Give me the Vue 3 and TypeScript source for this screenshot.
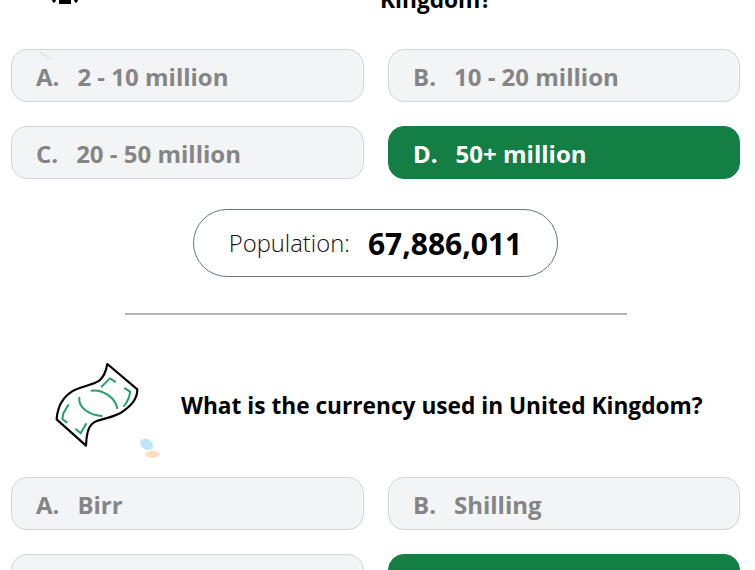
<script setup lang="ts">
interface Option { letter: string; text: string; correct?: boolean }
const firstOptions: Option[] = [
  { letter: 'A.', text: '2 - 10 million' },
  { letter: 'B.', text: '10 - 20 million' },
  { letter: 'C.', text: '20 - 50 million' },
  { letter: 'D.', text: '50+ million', correct: true },
]
const secondOptions: Option[] = [
  { letter: 'A.', text: 'Birr' },
  { letter: 'B.', text: 'Shilling' },
  { letter: 'C.', text: 'Dollar' },
  { letter: 'D.', text: 'Pound', correct: true },
]
</script>

<template>
  <main class="page">
    <section class="top">
      <div class="cut-head">
        <svg class="cut-icon" width="40" height="6" viewBox="0 0 40 6">
          <path d="M7 0 L11 0 L10 2.5 L8 2.5Z M14 0 H26 V4 H14Z M29 0 L33 0 L32 2.5 L30 2.5Z" fill="#000" />
        </svg>
        <span class="cut-title">Kingdom?</span>
      </div>
      <div class="options">
        <div v-for="o in firstOptions" :key="o.letter" class="opt" :class="{ correct: o.correct }">
          <span class="letter">{{ o.letter }}</span><span>{{ o.text }}</span>
        </div>
        <svg class="fleck" width="16" height="12" viewBox="0 0 16 12"><path d="M2 2 L14 10" stroke="#d5efdf" stroke-width="2" /></svg>
      </div>
    </section>

    <div class="pop">
      <span class="pop-label">Population:</span>
      <strong class="pop-value">67,886,011</strong>
    </div>

    <hr class="rule" />

    <div class="question">
      <svg class="money" width="150" height="120" viewBox="0 0 450 360" fill="none">
        <path d="M232 42 L322 118 C322 145 308 165 270 190 C245 203 225 204 200 213 C178 222 170 240 168 287 L80 208 C82 175 95 145 125 125 C150 108 185 108 208 92 C222 80 228 65 232 42Z" fill="#fff" stroke="#000" stroke-width="6.5" stroke-linejoin="round" />
        <g stroke="#23a164" stroke-width="6" stroke-linecap="round" stroke-linejoin="round">
          <path d="M185 122 C215 118 255 140 262 175" />
          <path d="M148 143 C145 172 175 195 215 198" />
          <path d="M215 110 L240 85 L255 95" />
          <path d="M285 115 L300 125 C300 140 292 155 282 168" />
          <path d="M115 165 L100 190 L97 207 L110 217" />
          <path d="M138 238 L152 250 L168 222" />
        </g>
        <ellipse cx="350" cy="283" rx="21" ry="15" fill="#bfe6f5" transform="rotate(30 350 283)" />
        <ellipse cx="367" cy="313" rx="22" ry="11" fill="#fbdfc0" />
      </svg>
      <h2 class="q-text">What is the currency used in United Kingdom?</h2>
    </div>

    <div class="options second">
      <div v-for="o in secondOptions" :key="o.letter" class="opt" :class="{ correct: o.correct }">
        <span class="letter">{{ o.letter }}</span><span>{{ o.text }}</span>
      </div>
    </div>
  </main>
</template>

<style>
html, body { margin: 0; background: #fff; overflow: hidden; }
</style>

<style scoped>
.page {
  width: 755px;
  height: 570px;
  overflow: hidden;
  font-family: "Open Sans", sans-serif;
  box-sizing: border-box;
  padding: 0 15px 0 11px;
  color: #000;
}
.top { position: relative; }
.cut-head { height: 49px; position: relative; overflow: hidden; }
.cut-icon { position: absolute; left: 34px; top: 0; }
.cut-title {
  position: absolute; left: 369px; top: -12px;
  font-size: 22.7px; font-weight: 700; line-height: 24px;
}
.options {
  display: grid;
  grid-template-columns: 353px 352px;
  column-gap: 24px;
  row-gap: 24px;
  position: relative;
}
.opt {
  height: 53px;
  box-sizing: border-box;
  border: 1px solid #d1d5db;
  border-radius: 16px;
  background: #f3f4f6;
  color: #858585;
  font-size: 24px;
  font-weight: 700;
  display: flex;
  align-items: center;
  padding: 2px 0 0 24px;
  line-height: 1;
}
.letter { margin-right: 18px; }
.correct { background: #147f45; border-color: #147f45; color: #fff; }
.fleck { position: absolute; left: 27px; top: 1px; }
.pop {
  width: 365px;
  height: 68px;
  box-sizing: border-box;
  margin: 30px auto 0;
  border: 1px solid #64748b;
  border-radius: 34px;
  display: flex;
  align-items: center;
  justify-content: center;
  gap: 18px;
}
.pop-label { font-size: 23.8px; font-weight: 300; color: #111; }
.pop-value { font-size: 30px; font-weight: 700; }
.rule {
  width: 502px;
  height: 2px;
  border: 0;
  background: #b4b4b8;
  margin: 36px 0 0 114px;
}
.question {
  display: flex;
  align-items: center;
  height: 162px;
  box-sizing: border-box;
  padding-top: 18px;
}
.money { margin: 10px 0 0 19px; flex: none; }
.q-text { margin: 0 0 0 1px; font-size: 22.7px; font-weight: 700; white-space: nowrap; }
</style>
